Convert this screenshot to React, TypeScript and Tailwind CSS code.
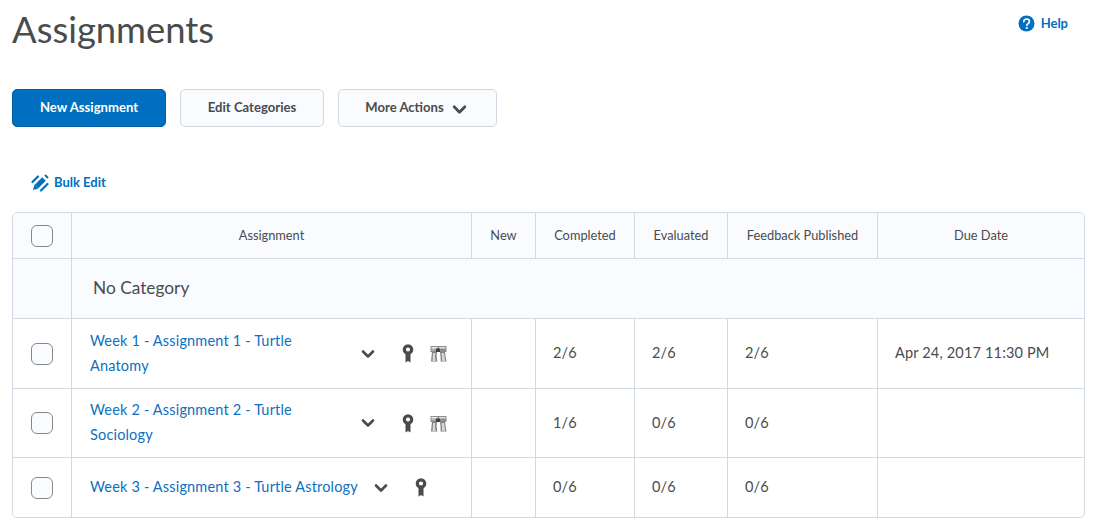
import React from "react";

const Chevron = ({ className = "" }: { className?: string }) => (
  <svg viewBox="0 0 14 10" className={className} fill="none" stroke="#494c4e" strokeWidth="2.6" strokeLinecap="round" strokeLinejoin="round">
    <path d="M2 2.5 7 7.5 12 2.5" />
  </svg>
);

const Ribbon = () => (
  <svg width="12" height="19" viewBox="0 0 12 19" className="shrink-0">
    <path d="M3.5 9h5v9.500L6 17l-2.500 1.500z" fill="#494c4e" />
    <circle cx="6" cy="5.500" r="3.700" fill="#fff" stroke="#494c4e" strokeWidth="3.200" />
  </svg>
);

const Rubric = () => (
  <svg width="17" height="17" viewBox="0 0 17 17" className="shrink-0">
    <path d="M0.500 1h16v6H0.500z" fill="#8a8c8d" />
    <path d="M1.500 2h6v1.500h-6z" fill="#f4f4f4" />
    <path d="M9 2h6.500v1.500H9z" fill="#e0e1e1" />
    <path d="M1.500 3.500h4v2h-4z" fill="#bbbcbd" />
    <path d="M6 3.500h4v3.500H6z" fill="#3f4143" />
    <path d="M2 7h5L6.500 11l1 5.500H1z" fill="#7f8182" />
    <path d="M10 7h5l.5 4 1 5.500h-6L10.500 11z" fill="#7f8182" />
    <path d="M3 8h2.500l-.5 3 .7 5H2.500z" fill="#d5d6d6" />
    <path d="M11.500 8H14l.5 3 .7 5h-3z" fill="#d5d6d6" />
    <path d="M7.500 11h2.500l.5 5.500h-3z" fill="#fff" />
  </svg>
);

const Box = () => (
  <span className="block h-[22px] w-[22px] rounded-[6px] border border-[#85898c] bg-[#f9fbff]" />
);

const rows = [
  { name: ["Week 1 - Assignment 1 - Turtle", "Anatomy"], c: "2/6", e: "2/6", f: "2/6", due: "Apr 24, 2017 11:30 PM", rubric: true, h: "h-[70px]" },
  { name: ["Week 2 - Assignment 2 - Turtle", "Sociology"], c: "1/6", e: "0/6", f: "0/6", due: "", rubric: true, h: "h-[69px]" },
  { name: ["Week 3 - Assignment 3 - Turtle Astrology"], c: "0/6", e: "0/6", f: "0/6", due: "", rubric: false, h: "h-[59px]" },
];

const cols = "grid grid-cols-[58px_400px_64px_99px_93px_150px_1fr]";
const cell = "border-l border-[#d3d9e3] flex items-center";
const head = `${cell} justify-center text-[12.8px] text-[#494c4e]`;
const num = `${cell} pl-[17px] pb-px text-[14.5px] tracking-[0.17px] text-[#494c4e]`;

export default function App() {
  return (
    <div className="h-[527px] w-[1097px] overflow-hidden bg-white pl-3 pr-3 font-['Lato','Noto_Sans',sans-serif] text-[#494c4e]">
      <div className="flex items-start justify-between">
        <h1 className="mt-[7px] text-[36.4px] leading-[45px] font-normal text-[#494c4e]">Assignments</h1>
        <a className="mt-[14px] mr-[17px] flex items-center gap-[6px] text-[13px] font-bold text-[#006fbf]">
          <svg width="17" height="17" viewBox="0 0 17 17">
            <circle cx="8.500" cy="8.500" r="8" fill="#006fbf" />
            <path d="M5.800 6.600C5.900 5 7 4 8.600 4c1.600 0 2.800 1 2.800 2.400 0 1.200-.7 1.800-1.500 2.300-.7.4-1 .8-1 1.600" fill="none" stroke="#fff" strokeWidth="1.700" strokeLinecap="round" />
            <circle cx="8.800" cy="13" r="1.100" fill="#fff" />
          </svg>
          Help
        </a>
      </div>

      <div className="mt-[37px] flex gap-[14px] text-[13.1px] font-bold">
        <button className="h-[38px] w-[154px] rounded-[5px] border border-[#005fa3] bg-[#006fbf] text-white">New Assignment</button>
        <button className="h-[38px] w-[144px] rounded-[5px] border border-[#d3d9e3] bg-[#f9fbff] text-[#494c4e]">Edit Categories</button>
        <button className="flex h-[38px] w-[159px] items-center justify-center gap-[8px] rounded-[5px] border border-[#d3d9e3] bg-[#f9fbff] pr-[3px] text-[#494c4e]">
          More Actions
          <Chevron className="mt-[3px] h-[11px] w-[15px]" />
        </button>
      </div>

      <a className="mt-[45px] ml-[19px] flex h-[22px] items-center gap-[5px] text-[13px] font-bold text-[#006fbf]">
        <svg width="18" height="18" viewBox="0 0 18 18">
          <path d="M5.500 12.500 13 5" stroke="#006fbf" strokeWidth="5" />
          <path d="M3.500 10.500 2 16l5.500-1.500z" fill="#006fbf" />
          <path d="M1.500 8 7 2.500M10 16.500l6.500-6.500" stroke="#006fbf" strokeWidth="2.200" strokeLinecap="round" />
          <path d="M14 1l3 3" stroke="#006fbf" strokeWidth="2" />
        </svg>
        Bulk Edit
      </a>

      <div className="mt-[18px] w-[1073px] overflow-hidden rounded-[5px] border border-[#d3d9e3]">
        <div className={`${cols} h-[46px] border-b border-[#d3d9e3] bg-[#f9fbff]`}>
          <div className="flex items-center justify-center"><Box /></div>
          <div className={head}>Assignment</div>
          <div className={head}>New</div>
          <div className={head}>Completed</div>
          <div className={head}>Evaluated</div>
          <div className={head}>Feedback Published</div>
          <div className={head}>Due Date</div>
        </div>
        <div className="grid h-[60px] grid-cols-[58px_1fr] border-b border-[#d3d9e3] bg-[#f9fbff]">
          <div />
          <div className={`${cell} pl-[21px] pb-[2px] text-[17.300px]`}>No Category</div>
        </div>
        {rows.map((r, i) => (
          <div key={i} className={`${cols} ${r.h} ${i < 2 ? "border-b border-[#d3d9e3]" : ""}`}>
            <div className="flex items-center justify-center"><Box /></div>
            <div className={`${cell} pl-[18px]`}>
              {r.rubric ? (
                <>
                  <div className="mb-[2px] w-[271px] text-[14.5px] leading-[25px] tracking-[0.17px] text-[#0f6fc0]">
                    {r.name.map((n) => <div key={n}>{n}</div>)}
                  </div>
                  <Chevron className="h-[10px] w-[14px]" />
                  <span className="ml-[27px]"><Ribbon /></span>
                  <span className="ml-[16px]"><Rubric /></span>
                </>
              ) : (
                <>
                  <div className="mb-[2px] text-[14.5px] tracking-[0.17px] text-[#0f6fc0]">{r.name[0]}</div>
                  <Chevron className="ml-[16px] h-[10px] w-[14px]" />
                  <span className="ml-[27px]"><Ribbon /></span>
                </>
              )}
            </div>
            <div className={cell} />
            <div className={num}>{r.c}</div>
            <div className={num}>{r.e}</div>
            <div className={num}>{r.f}</div>
            <div className={num}>{r.due}</div>
          </div>
        ))}
      </div>
    </div>
  );
}
